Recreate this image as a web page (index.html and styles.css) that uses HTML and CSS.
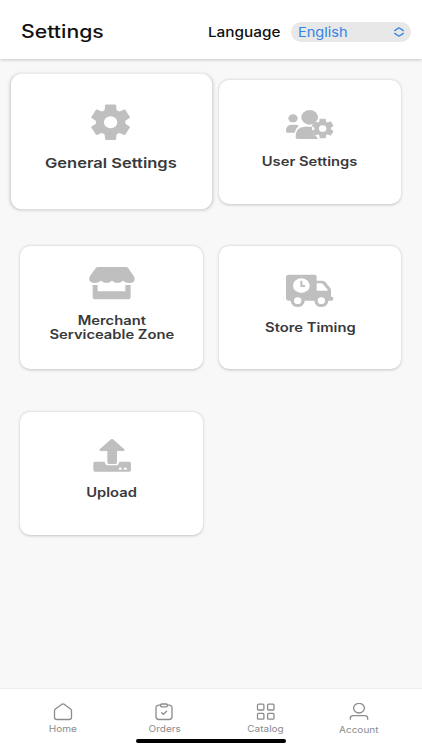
FILE: index.html
```html
<!DOCTYPE html>
<html lang="en">
<head>
    <meta charset="UTF-8">
    <meta name="viewport" content="width=device-width, initial-scale=1.0">
    <title>Settings</title>
    <link rel="stylesheet" href="styles.css">
</head>
<body>
    <!-- Shared gear shape -->
    <svg class="defs" width="0" height="0">
        <symbol id="gear" viewBox="-110 -110 220 220" preserveAspectRatio="none" overflow="visible">
            <circle r="75"/>
            <g stroke-width="10" stroke-linejoin="round" stroke="currentColor">
                <path id="tooth" d="M-23 -95H23L26 -60H-26Z"/>
                <use href="#tooth" transform="rotate(60)"/>
                <use href="#tooth" transform="rotate(120)"/>
                <use href="#tooth" transform="rotate(180)"/>
                <use href="#tooth" transform="rotate(240)"/>
                <use href="#tooth" transform="rotate(300)"/>
            </g>
            <circle r="34" fill="#fff"/>
        </symbol>
    </svg>

    <header class="header">
        <h1><span class="title">Settings</span></h1>
        <div class="language">
            <span class="language-label">Language</span>
            <button class="language-select">
                <span class="language-value">English</span>
                <svg width="10" height="10" viewBox="0 0 10 10"><path d="M.7 3.6L5 .8L9.3 3.6M.7 6.4L5 9.2L9.3 6.4"/></svg>
            </button>
        </div>
    </header>

    <main class="cards">
        <a class="card active">
            <svg class="icon" viewBox="0 0 144 96">
                <use href="#gear" x="12" y="-5" width="118" height="106"/>
            </svg>
            <span>General Settings</span>
        </a>
        <a class="card">
            <svg class="icon" viewBox="0 0 144 96">
                <ellipse cx="21" cy="31" rx="14" ry="12"/>
                <path d="M4 74Q0 74 0 70Q0 50 16 50H29Q36 50 38 54Q29 61 26 74Z"/>
                <ellipse cx="71" cy="28" rx="25" ry="22"/>
                <path d="M34 93Q29 93 29 87Q29 56 57 56H80L82 79L94 88Q97 93 92 93Z"/>
                <ellipse cx="110" cy="62" rx="32" ry="29" fill="#fff"/>
                <use href="#gear" x="74" y="29" width="72" height="65"/>
            </svg>
            <span>User Settings</span>
        </a>
        <a class="card">
            <svg class="icon" viewBox="0 0 144 96">
                <path d="M30 0H114Q118 0 121 4L137 27Q143 38 137 44Q131 49 123 48Q113 48 105 41Q97 48 89 48Q80 48 72 41Q64 48 56 48Q47 48 39 41Q31 48 21 48Q12 49 6 43Q1 37 6 27L23 4Q26 0 30 0Z"/>
                <path d="M14 54H29V73H112V54H128V91Q128 97 122 97H20Q14 97 14 91Z"/>
            </svg>
            <span>Merchant<br>Serviceable Zone</span>
        </a>
        <a class="card">
            <svg class="icon" viewBox="0 0 144 96">
                <path d="M8 2H84Q92 2 92 9V20H108Q114 20 118 24L132 41Q135 45 135 49V68H138Q142 68 142 74Q142 80 138 80H8Q0 80 0 72V10Q0 2 8 2Z"/>
                <ellipse cx="35" cy="80" rx="21" ry="19"/>
                <ellipse cx="106" cy="80" rx="21" ry="19"/>
                <g fill="#fff">
                    <ellipse cx="46" cy="35" rx="25" ry="22"/>
                    <path d="M92 28H105Q108 28 111 31L125 47V50H92Z"/>
                    <ellipse cx="35" cy="80" rx="11" ry="10"/>
                    <ellipse cx="106" cy="80" rx="11" ry="10"/>
                </g>
                <path class="hands" d="M46 20V36H57"/>
            </svg>
            <span>Store Timing</span>
        </a>
        <a class="card">
            <svg class="icon" viewBox="0 0 144 96">
                <path d="M69 1Q72 -1 75 1L109 31Q112 35 106 36H87V70Q87 75 81 75H63Q58 75 58 70V36H38Q32 35 35 31Z"/>
                <path d="M21 68H50Q51 79 62 79H83Q93 79 94 68H124Q129 68 129 73V93Q129 98 124 98H21Q16 98 16 93V73Q16 68 21 68Z"/>
                <ellipse cx="97" cy="89" rx="4.5" ry="3.5" fill="#fff"/>
                <ellipse cx="112" cy="89" rx="4.5" ry="3.5" fill="#fff"/>
            </svg>
            <span>Upload</span>
        </a>
    </main>

    <nav class="tabbar">
        <a class="tab">
            <svg viewBox="0 0 20 18"><path d="M1.5 7.8Q1.5 6.8 2.4 6.1L8.6 1.4Q10 .5 11.4 1.4L17.6 6.1Q18.5 6.8 18.5 7.8V14.2Q18.5 16.5 16 16.5H4Q1.5 16.5 1.5 14.2Z"/></svg>
            <span>Home</span>
        </a>
        <a class="tab">
            <svg viewBox="0 0 20 18"><path d="M6.5 2.2H5Q2 2.2 2 5V13.8Q2 16.5 5 16.5H15Q18 16.5 18 13.8V5Q18 2.2 15 2.2H13.5"/><rect x="6.5" y="1" width="7" height="2.8" rx="1.4"/><path d="M7.6 9.7L9.4 11.3L12.6 8.3"/></svg>
            <span>Orders</span>
        </a>
        <a class="tab">
            <svg viewBox="0 0 20 18"><rect x="1.5" y="1.2" width="6.4" height="5.8" rx="1"/><rect x="11.6" y="1.2" width="6.4" height="5.8" rx="1"/><rect x="1.5" y="10.4" width="6.4" height="5.8" rx="1"/><rect x="11.6" y="10.4" width="6.4" height="5.8" rx="1"/></svg>
            <span>Catalog</span>
        </a>
        <a class="tab account-tab">
            <svg viewBox="0 0 20 18"><ellipse cx="10" cy="5.2" rx="5.4" ry="4.8"/><path d="M1.3 16.3V15.2Q1.3 12.6 4.2 12.6H15.8Q18.7 12.6 18.7 15.2V16.3"/></svg>
            <span>Account</span>
        </a>
        <div class="home-indicator"></div>
    </nav>
</body>
</html>
```
FILE: styles.css
```css
* {
    box-sizing: border-box;
}

body {
    margin: 0;
    height: 750px;
    display: flex;
    flex-direction: column;
    overflow: hidden;
    background-color: #f8f8f8;
    font-family: Inter, "Open Sans", sans-serif;
    color: #39393b;
}

.defs {
    position: absolute;
}

/* Labels are set a little wide */
span {
    display: inline-block;
    white-space: nowrap;
    transform: scaleX(1.18);
}

.header {
    height: 59px;
    padding: 4px 11.5px 0 20.5px;
    display: flex;
    align-items: center;
    justify-content: space-between;
    background-color: #fff;
    box-shadow: 0 1px 3px rgba(0, 0, 0, 0.2);
    color: #111;
}

h1 {
    margin: 0;
    font-size: 18px;
    line-height: 24px;
    font-weight: 500;
}

.title {
    transform-origin: left;
}

.language {
    display: flex;
    align-items: center;
    gap: 10px;
    font-size: 13px;
    font-weight: 500;
}

.language-label {
    transform-origin: right;
}

.language-select {
    width: 120px;
    height: 20px;
    padding: 0 7px;
    display: flex;
    align-items: center;
    justify-content: space-between;
    border: none;
    border-radius: 10px;
    background-color: #e8e8e9;
    color: #3284e4;
    font: 400 13px Inter, sans-serif;
}

.language-value {
    transform: scaleX(1.12);
    transform-origin: left;
}

.language-select svg {
    fill: none;
    stroke: #3284e4;
    stroke-width: 1.3;
    stroke-linecap: round;
    stroke-linejoin: round;
}

.cards {
    flex: 1;
    padding: 21.3px 20.7px 0 20.3px;
    display: grid;
    grid-template-columns: 1fr 1fr;
    grid-auto-rows: 123.4px;
    gap: 42.3px 16px;
}

.card {
    padding-bottom: 7px;
    display: flex;
    flex-direction: column;
    align-items: center;
    justify-content: center;
    gap: 15px;
    background-color: #fff;
    border-radius: 10px;
    box-shadow: 0 0.5px 3px rgba(0, 0, 0, 0.22);
    font-size: 12.5px;
    line-height: 14px;
    font-weight: 600;
    text-align: center;
}

.card.active {
    transform: scale(1.1);
}

.card.active span {
    transform: scaleX(1.2);
}

.icon {
    width: 48px;
    height: 32px;
    overflow: visible;
    fill: #bfbfbf;
    color: #bfbfbf;
}

.hands {
    fill: none;
    stroke: #bfbfbf;
    stroke-width: 6;
}

.tabbar {
    position: relative;
    height: 62px;
    padding: 14px 0 0 12.5px;
    display: flex;
    background-color: #fff;
    border-top: 1px solid #ececec;
    color: #8d8d8d;
}

.tab {
    width: 101.3px;
    display: flex;
    flex-direction: column;
    align-items: center;
    gap: 2px;
    font-size: 8.5px;
    line-height: 12px;
}

.account-tab {
    width: 85px;
    gap: 3px;
}

.tab svg {
    width: 20px;
    height: 18px;
    fill: none;
    stroke: #8c8c8c;
    stroke-width: 1.3;
    stroke-linecap: round;
    stroke-linejoin: round;
}

.home-indicator {
    position: absolute;
    left: 136px;
    bottom: 7px;
    width: 150px;
    height: 4px;
    border-radius: 2px;
    background-color: #000;
}
```
